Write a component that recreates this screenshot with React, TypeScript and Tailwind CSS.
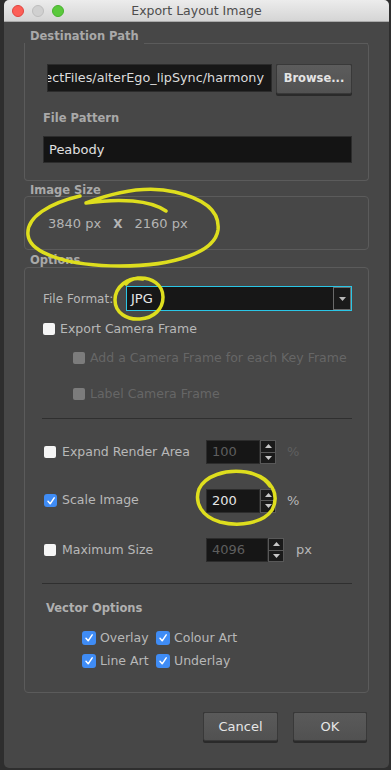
import React from "react";

function Box({ checked, disabled, size = 12 }: { checked?: boolean; disabled?: boolean; size?: number }) {
  if (checked) {
    return (
      <div className={`${size === 14 ? "w-[14px] h-[14px]" : "w-[13px] h-[13px]"} rounded-[3px] bg-[#3f8cf5] flex items-center justify-center shrink-0`}>
        <svg width="10" height="10" viewBox="0 0 10 10">
          <path d="M2 5.3 L4.2 7.8 L8.2 1.8" fill="none" stroke="#ffffff" strokeWidth="1.5" strokeLinecap="round" strokeLinejoin="round" />
        </svg>
      </div>
    );
  }
  return (
    <div
      className={`w-[12px] h-[12px] rounded-[2px] shrink-0 ${disabled ? "bg-[#7c7c7c]" : "bg-[#f5f5f5]"}`}
    />
  );
}

function Spin({ value, disabled, width }: { value: string; disabled?: boolean; width: string }) {
  return (
    <div className={`flex h-[24px] ${width}`}>
      <div className={`flex-1 bg-[#161616] border border-[#2c2c2c] flex items-center pl-[5px] text-[13px] ${disabled ? "text-[#5e5e5e]" : "text-[#e6e6e6]"}`}>
        {value}
      </div>
      <div className="w-[16px] flex flex-col">
        <div className="flex-1 bg-[#1a1a1a] border border-[#585858] flex items-center justify-center">
          <svg width="7" height="4" viewBox="0 0 7 4"><path d="M0 4 L3.5 0 L7 4 Z" fill="#c8c8c8" /></svg>
        </div>
        <div className="flex-1 bg-[#1a1a1a] border border-t-0 border-[#585858] flex items-center justify-center">
          <svg width="7" height="4" viewBox="0 0 7 4"><path d="M0 0 L3.5 4 L7 0 Z" fill="#c8c8c8" /></svg>
        </div>
      </div>
    </div>
  );
}

export default function App() {
  return (
    <div className="w-[391px] h-[770px] bg-[#2e2e2e] overflow-hidden font-['DejaVu_Sans',sans-serif] text-[12px] text-[#b8b8b8]">
      <div className="relative ml-[4px] w-[385px] h-[768px] bg-[#474747] rounded-[5px] overflow-hidden">
        {/* title bar */}
        <div className="h-[22px] bg-gradient-to-b from-[#ececec] to-[#d5d5d5] border-b border-[#a9a9a9] grid grid-cols-[1fr_auto_1fr] items-center">
          <div className="flex items-center gap-[8px] pl-[8px]">
            <div className="w-[12px] h-[12px] rounded-full bg-[#fc5f57] border border-[#e0443e]" />
            <div className="w-[12px] h-[12px] rounded-full bg-[#d0d0d0] border border-[#bdbdbd]" />
            <div className="w-[12px] h-[12px] rounded-full bg-[#5ac93c] border border-[#48b12e]" />
          </div>
          <div className="text-[#4d4d4d] text-[12.5px] leading-[14px]">Export Layout Image</div>
          <div />
        </div>

        <div className="px-[20px]">
          {/* Destination Path group */}
          <div className="mt-[7px] h-[14px] leading-[14px] pl-[6px] text-[#a9a9a9] font-bold text-[11.5px]">Destination Path</div>
          <div className="border-x border-b border-[#5b5b5b] rounded-b-[4px] rounded-tr-[4px]">
            <div className="ml-[119px] border-t border-[#5b5b5b]" />
            <div className="pl-[22px] pt-[20px] flex items-start gap-[4px]">
              <div className="w-[225px] h-[28px] bg-[#171717] border border-[#2c2c2c] overflow-hidden flex justify-end items-center pr-[7px]">
                <span className="whitespace-nowrap text-[12.8px] text-[#dcdcdc]">ProjectFiles/alterEgo_lipSync/harmony</span>
              </div>
              <div className="w-[76px] h-[32px] rounded-[2px] bg-[#2a2a2a] pb-[2px]">
                <div className="h-[30px] rounded-[2px] bg-gradient-to-b from-[#5c5c5c] to-[#525252] border border-[#393939] flex items-center justify-center text-[#e4e4e4] font-bold text-[11.5px]">
                  Browse...
                </div>
              </div>
            </div>
            <div className="ml-[18px] mt-[16px] h-[13px] leading-[13px] text-[#a9a9a9] font-bold text-[11.5px]">File Pattern</div>
            <div className="ml-[18px] mt-[11px] w-[309px] h-[27px] bg-[#141414] border border-[#2c2c2c] flex items-center pl-[5px] text-[13px] text-[#e0e0e0]">
              Peabody
            </div>
            <div className="h-[17px]" />
          </div>

          {/* Image Size group */}
          <div className="mt-[3px] h-[12px] leading-[12px] pl-[6px] text-[#a9a9a9] font-bold text-[11.5px]">Image Size</div>
          <div className="border border-[#5b5b5b] rounded-[4px] pt-[20px] pb-[18px] pl-[23px] flex items-center h-[54px] text-[13px] text-[#b4b4b4]">
            <span>3840 px</span>
            <span className="ml-[12px] font-bold text-[12px]">X</span>
            <span className="ml-[12px]">2160 px</span>
          </div>

          {/* Options group */}
          <div className="mt-[4px] h-[13px] leading-[13px] pl-[6px] text-[#a9a9a9] font-bold text-[11.5px]">Options</div>
          <div className="border border-[#5b5b5b] rounded-[4px] h-[426px]">
            <div className="mt-[18px] ml-[18px] flex items-center h-[25px]">
              <div className="w-[83px] text-[12px]">File Format:</div>
              <div className="w-[226px] h-[25px] border border-[#2ac6e6] bg-[#171717] flex">
                <div className="flex-1 flex items-center pl-[4px] text-[13px] text-[#e8e8e8]">JPG</div>
                <div className="w-[18px] border border-[#6a6a6a] bg-[#1a1a1a] flex items-center justify-center">
                  <svg width="7" height="4" viewBox="0 0 7 4"><path d="M0 0 L3.5 4 L7 0 Z" fill="#b8b8b8" /></svg>
                </div>
              </div>
            </div>
            <div className="mt-[11px] ml-[18px] h-[14px] flex items-center gap-[5px] text-[12.5px]">
              <Box />
              <span>Export Camera Frame</span>
            </div>
            <div className="mt-[15px] ml-[48px] h-[14px] flex items-center gap-[5px] text-[12.5px] text-[#666666]">
              <Box disabled />
              <span>Add a Camera Frame for each Key Frame</span>
            </div>
            <div className="mt-[22px] ml-[48px] h-[14px] flex items-center gap-[5px] text-[12.5px] text-[#666666]">
              <Box disabled />
              <span>Label Camera Frame</span>
            </div>
            <div className="mt-[17px] ml-[17px] w-[310px] h-px bg-[#2f2f2f]" />

            <div className="mt-[21px] ml-[19px] flex items-center h-[24px] text-[12.5px]">
              <div className="w-[162px] flex items-center gap-[6px]">
                <Box />
                <span>Expand Render Area</span>
              </div>
              <Spin value="100" disabled width="w-[70px]" />
              <span className="ml-[11px] text-[#5f5f5f] text-[13px]">%</span>
            </div>
            <div className="mt-[24px] ml-[19px] flex items-center h-[25px] text-[12.5px]">
              <div className="w-[162px] flex items-center gap-[5px]">
                <Box checked />
                <span>Scale Image</span>
              </div>
              <Spin value="200" width="w-[70px]" />
              <span className="ml-[11px] text-[#b8b8b8] text-[13px]">%</span>
            </div>
            <div className="mt-[25px] ml-[19px] flex items-center h-[24px] text-[12.5px]">
              <div className="w-[162px] flex items-center gap-[6px]">
                <Box />
                <span>Maximum Size</span>
              </div>
              <Spin value="4096" disabled width="w-[78px]" />
              <span className="ml-[12px] text-[#b8b8b8] text-[13px]">px</span>
            </div>
            <div className="mt-[21px] ml-[17px] w-[310px] h-px bg-[#2f2f2f]" />

            <div className="mt-[17px] ml-[21px] h-[14px] leading-[14px] font-bold text-[#b0b0b0] text-[11.5px]">Vector Options</div>
            <div className="mt-[16px] ml-[57px] grid grid-cols-[74px_auto] gap-y-[9px] text-[12.5px]">
              <div className="flex items-center gap-[4px] h-[14px]"><Box checked size={14} /><span>Overlay</span></div>
              <div className="flex items-center gap-[4px] h-[14px]"><Box checked size={14} /><span>Colour Art</span></div>
              <div className="flex items-center gap-[4px] h-[14px]"><Box checked size={14} /><span>Line Art</span></div>
              <div className="flex items-center gap-[4px] h-[14px]"><Box checked size={14} /><span>Underlay</span></div>
            </div>
          </div>
        </div>

        {/* buttons */}
        <div className="mt-[19px] pr-[22px] flex justify-end gap-[15px] text-[13px] text-[#e6e6e6]">
          <div className="w-[75px] h-[31px] bg-[#2a2a2a] rounded-[2px] pb-[2px]">
            <div className="h-[29px] rounded-[2px] bg-gradient-to-b from-[#5a5a5a] to-[#515151] border border-[#393939] flex items-center justify-center">Cancel</div>
          </div>
          <div className="w-[74px] h-[31px] bg-[#2a2a2a] rounded-[2px] pb-[2px]">
            <div className="h-[29px] rounded-[2px] bg-gradient-to-b from-[#5a5a5a] to-[#515151] border border-[#393939] flex items-center justify-center">OK</div>
          </div>
        </div>

        {/* hand-drawn annotations */}
        <svg className="absolute left-[-4px] top-0 w-[391px] h-[770px] pointer-events-none" viewBox="0 0 391 770">
          <g fill="none" stroke="#dede1e" strokeWidth="3.5" strokeLinecap="round" strokeLinejoin="round">
            <path d="M166 211 C150 200 120 198 86 203 C120 190 150 186 175 192 C205 199 220 212 218 230 C215 252 175 266 120 266 C70 266 30 254 28 235 C26 217 50 203 80 196" />
            <path d="M143 279 C128 276 115 287 115 300 C115 313 127 320 140 319 C154 318 163 309 163 297 C163 285 152 277 138 278 C132 279 128 281 126 284" />
            <path d="M250 473 C272 478 280 495 272 510 C263 523 240 527 220 522 C202 517 194 503 199 489 C205 476 225 469 246 472 C258 474 266 480 270 486" />
          </g>
        </svg>
      </div>
    </div>
  );
}
